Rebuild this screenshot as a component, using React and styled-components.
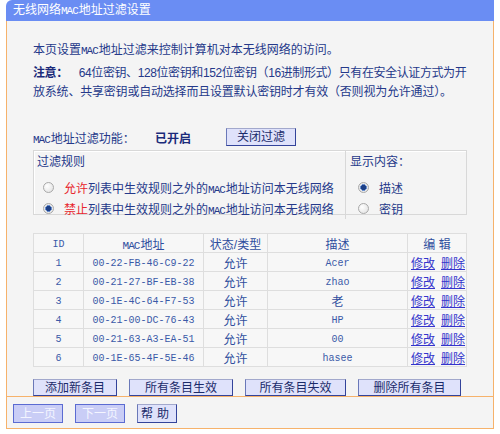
import React from 'react';
import styled, { createGlobalStyle } from 'styled-components';

const Global = createGlobalStyle`
  html, body { margin: 0; padding: 0; background: #fff; }
  body {
    font-family: "Liberation Sans", "Noto Sans CJK SC", sans-serif;
    font-size: 12px;
    color: #25398a;
  }
`;

const ORANGE = '#f6b26b';

const Frame = styled.div`
  width: 488px;
  margin-left: 6px;
`;

const TitleBar = styled.div`
  height: 21px;
  line-height: 21px;
  background: #6a8df3;
  color: #fff;
  border-top-left-radius: 6px;
  padding-left: 7px;
  font-size: 12px;
`;

const Panel = styled.div`
  background: #f4f4f4;
  border-left: 1px solid ${ORANGE};
  border-right: 1px solid ${ORANGE};
  border-bottom: 1px solid ${ORANGE};
`;

const Main = styled.div`
  box-sizing: border-box;
  height: 376px;
  padding: 20px 26px 0 26px;
  border-bottom: 1px solid ${ORANGE};
`;

const Line = styled.div`
  line-height: 19px;
  white-space: nowrap;
  margin-top: ${p => p.$mt || 0}px;
  letter-spacing: ${p => p.$ls || 0}px;
`;

const Mac = styled.span`
  font-family: "Liberation Mono", monospace;
  font-size: 11px;
  letter-spacing: -1px;
  margin-right: 1px;
`;

const Strong = styled.b`
  color: #1b2b7a;
  margin-right: 8px;
`;

const FilterRow = styled.div`
  margin-top: 26px;
  height: 18px;
  display: grid;
  grid-template-columns: 122px 71px auto;
  align-items: center;
`;

const StatusText = styled.b`
  color: #1b2b7a;
`;

const Button = styled.button`
  box-sizing: border-box;
  width: ${p => p.$w}px;
  height: ${p => p.$h || 18}px;
  padding: 0;
  background: #dfe2fb;
  border: 1px solid #33439a;
  border-top-color: #a2a8cc;
  border-left-color: #6a78b8;
  color: #1b2b6a;
  font-family: "Liberation Sans", "Noto Sans CJK SC", sans-serif;
  font-size: 12px;
  line-height: 16px;
  letter-spacing: ${p => p.$ls || 0}px;
`;

const DisabledButton = styled(Button)`
  background: #c9cdf6;
  border: 1px solid #5b6bd2;
  color: #f4f5ff;
`;

const Box = styled.div`
  box-sizing: border-box;
  margin-top: 4px;
  height: 65px;
  display: grid;
  grid-template-columns: 312px 1fr;
  border: 1px solid #d8d8d8;
  box-shadow: inset 1px 1px 0 #fff;
`;

const BoxCol = styled.div`
  padding-left: ${p => p.$pl}px;
  border-right: ${p => (p.$divider ? '1px solid #d8d8d8' : 'none')};
`;

const BoxTitle = styled.div`
  height: 22px;
  line-height: 22px;
  margin-bottom: 4px;
`;

const RadioRow = styled.div`
  display: flex;
  align-items: center;
  height: 21px;
  white-space: nowrap;
  padding-left: ${p => p.$indent}px;
`;

const Radio = styled.span`
  box-sizing: border-box;
  width: 11px;
  height: 11px;
  border-radius: 50%;
  border: 1px solid #a9a9a9;
  background: ${p =>
    p.$checked
      ? 'radial-gradient(circle, #1d3f86 0 2.3px, #6a8fcf 2.6px 3.2px, #e9e9e9 3.6px)'
      : 'radial-gradient(circle at 35% 35%, #ffffff, #dedede)'};
  margin-right: 10px;
  flex: none;
`;

const Red = styled.span`
  color: #e8262d;
`;

const Table = styled.table`
  margin-top: 18px;
  width: 434px;
  border-collapse: separate;
  border-spacing: 1px;
  background: #dedede;
  table-layout: fixed;
`;

const Th = styled.th`
  height: 18px;
  padding: 0;
  background: #f7f7f7;
  font-weight: normal;
  color: #2f4e9e;
  text-align: center;
  white-space: nowrap;
`;

const Td = styled.td`
  height: 18px;
  padding: 0;
  background: #f7f7f7;
  color: #2f4e9e;
  text-align: center;
  white-space: nowrap;
`;

const Mono = styled.span`
  font-family: "Liberation Mono", "Noto Sans CJK SC", monospace;
  font-size: 10px;
  color: #3a5aa8;
`;

const Link = styled.a`
  color: #3434cc;
  text-decoration: underline;
  margin: 0 3px;
  cursor: pointer;
`;

const ActionRow = styled.div`
  margin-top: 12px;
  display: flex;
  gap: 12px;
`;

const Footer = styled.div`
  box-sizing: border-box;
  height: 31px;
  padding: 7px 0 0 6px;
  display: flex;
  gap: 12px;
`;

const rows = [
  ['1', '00-22-FB-46-C9-22', 'Acer'],
  ['2', '00-21-27-BF-EB-38', 'zhao'],
  ['3', '00-1E-4C-64-F7-53', '老'],
  ['4', '00-21-00-DC-76-43', 'HP'],
  ['5', '00-21-63-A3-EA-51', '00'],
  ['6', '00-1E-65-4F-5E-46', 'hasee'],
];

const isLatin = s => /^[\x00-\x7f]+$/.test(s);

export default function App() {
  return (
    <>
      <Global />
      <Frame>
        <TitleBar>无线网络<Mac>MAC</Mac>地址过滤设置</TitleBar>
        <Panel>
          <Main>
            <Line>本页设置<Mac>MAC</Mac>地址过滤来控制计算机对本无线网络的访问。</Line>
            <Line $mt={3} $ls={-0.4}>
              <Strong>注意：</Strong> 64位密钥、128位密钥和152位密钥（16进制形式）只有在安全认证方式为开
            </Line>
            <Line $ls={-0.2}>放系统、共享密钥或自动选择而且设置默认密钥时才有效（否则视为允许通过）。</Line>

            <FilterRow>
              <span><Mac>MAC</Mac>地址过滤功能：</span>
              <StatusText>已开启</StatusText>
              <Button $w={70}>关闭过滤</Button>
            </FilterRow>

            <Box>
              <BoxCol $pl={3} $divider>
                <BoxTitle>过滤规则</BoxTitle>
                <RadioRow $indent={6}>
                  <Radio />
                  <span><Red>允许</Red>列表中生效规则之外的<Mac>MAC</Mac>地址访问本无线网络</span>
                </RadioRow>
                <RadioRow $indent={6}>
                  <Radio $checked />
                  <span><Red>禁止</Red>列表中生效规则之外的<Mac>MAC</Mac>地址访问本无线网络</span>
                </RadioRow>
              </BoxCol>
              <BoxCol $pl={4}>
                <BoxTitle>显示内容：</BoxTitle>
                <RadioRow $indent={8}>
                  <Radio $checked />
                  <span>描述</span>
                </RadioRow>
                <RadioRow $indent={8}>
                  <Radio />
                  <span>密钥</span>
                </RadioRow>
              </BoxCol>
            </Box>

            <Table>
              <colgroup>
                <col style={{ width: 49 }} />
                <col style={{ width: 119 }} />
                <col style={{ width: 63 }} />
                <col style={{ width: 139 }} />
                <col style={{ width: 58 }} />
              </colgroup>
              <thead>
                <tr>
                  <Th><Mono>ID</Mono></Th>
                  <Th><Mac>MAC</Mac>地址</Th>
                  <Th>状态/类型</Th>
                  <Th>描述</Th>
                  <Th>编 辑</Th>
                </tr>
              </thead>
              <tbody>
                {rows.map(([id, mac, desc]) => (
                  <tr key={id}>
                    <Td><Mono>{id}</Mono></Td>
                    <Td><Mono>{mac}</Mono></Td>
                    <Td>允许</Td>
                    <Td>{isLatin(desc) ? <Mono>{desc}</Mono> : desc}</Td>
                    <Td>
                      <Link>修改</Link>
                      <Link>删除</Link>
                    </Td>
                  </tr>
                ))}
              </tbody>
            </Table>

            <ActionRow>
              <Button $w={84} $h={17}>添加新条目</Button>
              <Button $w={104} $h={17}>所有条目生效</Button>
              <Button $w={101} $h={17}>所有条目失效</Button>
              <Button $w={103} $h={17}>删除所有条目</Button>
            </ActionRow>
          </Main>
          <Footer>
            <DisabledButton $w={50} $h={19}>上一页</DisabledButton>
            <DisabledButton $w={50} $h={19}>下一页</DisabledButton>
            <Button $w={40} $h={19} $ls={4}>帮助</Button>
          </Footer>
        </Panel>
      </Frame>
    </>
  );
}
